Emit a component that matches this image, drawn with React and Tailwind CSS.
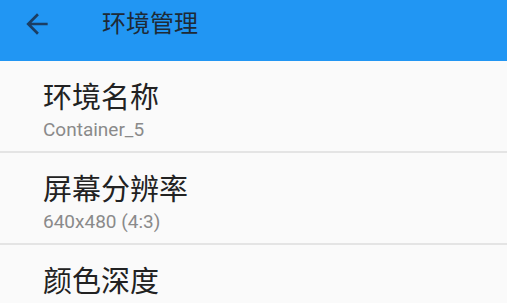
import React from 'react';

const settings = [
    { title: '环境名称', value: 'Container_5' },
    { title: '屏幕分辨率', value: '640x480 (4:3)' },
    { title: '颜色深度' },
];

const BackArrow = () => (
    <svg width="32" height="32" viewBox="0 0 24 24" className="text-[#1b3e63]">
        <path d="M20 11H7.83l5.59-5.59L12 4l-8 8 8 8 1.41-1.41L7.83 13H20v-2z" fill="currentColor" />
    </svg>
);

const App = () => {
    return (
        <div
            className="w-[507px] h-[303px] overflow-hidden bg-[#fafafa]"
            style={{ fontFamily: 'Roboto, "Noto Sans CJK SC", sans-serif' }}
        >
            <div className="h-[61px] bg-[#2196f3] flex items-center">
                <div className="w-[102px] pl-[21px] pb-[13px]">
                    <BackArrow />
                </div>
                <h1 className="text-[24px] leading-none text-[#1e2a36] pb-[13px]">环境管理</h1>
            </div>

            {settings.map((item) => (
                <div key={item.title} className="h-[92px] border-b-2 border-[#e4e4e4] pl-[43px] pt-[18px]">
                    <div className="text-[29px] leading-[38px] text-[#222]">{item.title}</div>
                    {item.value && (
                        <div className="text-[19px] leading-[24px] mt-[1px] text-[#8a8a8a]">{item.value}</div>
                    )}
                </div>
            ))}
        </div>
    );
};

export default App;
